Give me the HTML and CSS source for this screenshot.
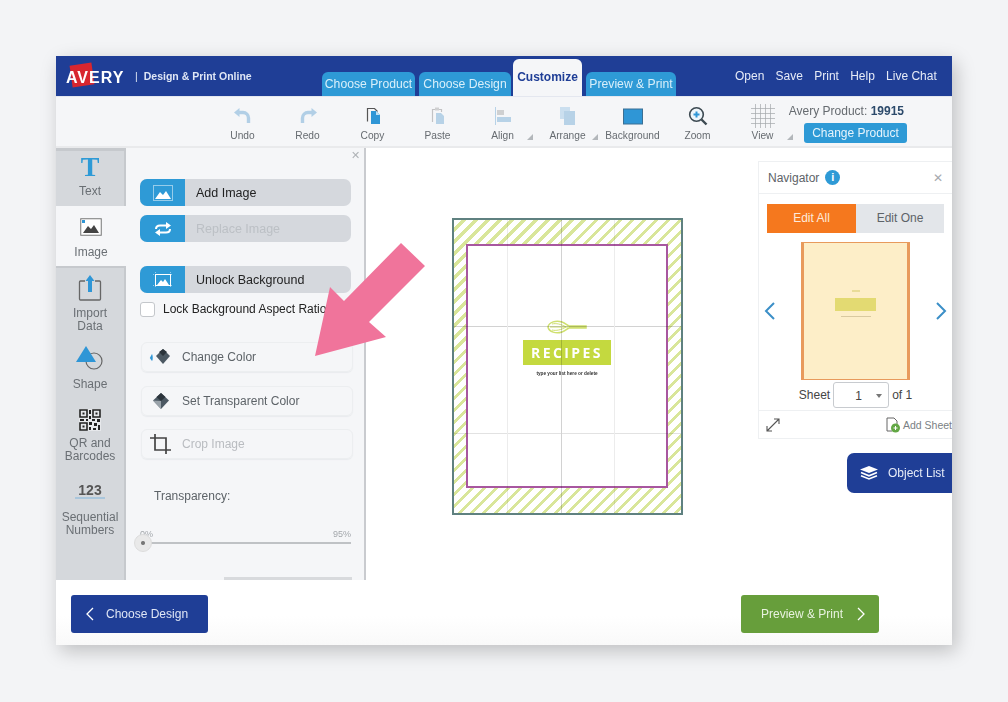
FILE: index.html
```html
<!DOCTYPE html>
<html>
<head>
    <title>Avery Design &amp; Print Online</title>
    <link rel="stylesheet" href="styles.css">
</head>
<body>
    <div class="app">
        <header class="topbar">
            <div class="brand">
                <span class="logo"><span class="logo-red"></span><span class="logo-text">AVERY</span></span>
                <span class="brand-sep">|</span>
                <span class="brand-name">Design &amp; Print Online</span>
            </div>
            <nav class="steps">
                <a class="step">Choose Product</a>
                <a class="step">Choose Design</a>
                <a class="step step-active">Customize</a>
                <a class="step">Preview &amp; Print</a>
            </nav>
            <nav class="top-links">
                <a>Open</a><a>Save</a><a>Print</a><a>Help</a><a>Live Chat</a>
            </nav>
        </header>

        <div class="toolbar">
            <div class="tool faded">
                <svg width="22" height="20" viewBox="0 0 22 20"><path d="M6 6.500h5a5.500 5.500 0 0 1 5.500 5.500v5" fill="none" stroke="#4f97cc" stroke-width="3.400"/><path d="M2 6.500 7.500 2v9z" fill="#4f97cc"/></svg>
                <span>Undo</span>
            </div>
            <div class="tool faded">
                <svg width="22" height="20" viewBox="0 0 22 20"><path d="M16 6.500h-5A5.500 5.500 0 0 0 5.500 12v5" fill="none" stroke="#4f97cc" stroke-width="3.400"/><path d="M20 6.500 14.500 2v9z" fill="#4f97cc"/></svg>
                <span>Redo</span>
            </div>
            <div class="tool">
                <svg width="22" height="20" viewBox="0 0 22 20"><path d="M5.500 15.500V2.500h7l3 3" fill="none" stroke="#555" stroke-width="1.200"/><path d="M9 5h5l4 4v9H9z" fill="#2f96d6"/><path d="M14 5v4h4z" fill="#bfe0f4"/></svg>
                <span>Copy</span>
            </div>
            <div class="tool faded">
                <svg width="22" height="20" viewBox="0 0 22 20"><path d="M5.500 16V3.500h9V6" fill="none" stroke="#777" stroke-width="1.200"/><rect x="8" y="1.500" width="4" height="3" fill="#999"/><path d="M9 7h5l3 3v8H9z" fill="#5b9fd0"/></svg>
                <span>Paste</span>
            </div>
            <div class="tool faded corner">
                <svg width="22" height="20" viewBox="0 0 22 20"><path d="M3.500 1v18" stroke="#5b9fd0" fill="none"/><rect x="5" y="4" width="7" height="5" fill="#999"/><rect x="5" y="11" width="14" height="5" fill="#5b9fd0"/></svg>
                <span>Align</span>
            </div>
            <div class="tool faded corner">
                <svg width="22" height="20" viewBox="0 0 22 20"><rect x="3" y="1" width="10" height="12" fill="#8dbfe2"/><rect x="7" y="5" width="11" height="14" fill="#5b9fd0"/></svg>
                <span>Arrange</span>
            </div>
            <div class="tool">
                <svg width="22" height="20" viewBox="0 0 22 20"><rect x="1.500" y="3" width="19" height="15" fill="#2f96d6" stroke="#3b6f93"/></svg>
                <span>Background</span>
            </div>
            <div class="tool">
                <svg width="22" height="20" viewBox="0 0 22 20"><circle cx="9.500" cy="8.500" r="6.800" fill="#eef5fa" stroke="#3d4a52" stroke-width="1.600"/><path d="M6.500 8.500h6M9.500 5.500v6" stroke="#2f96d6" stroke-width="2"/><path d="m14.500 13.500 5 5" stroke="#3d4a52" stroke-width="2.400"/></svg>
                <span>Zoom</span>
            </div>
            <div class="tool corner tool-view">
                <svg width="24" height="24" viewBox="0 0 24 24"><path d="M0 4.500h24M0 9.500h24M0 14.500h24M0 19.500h24M4.500 0v24M9.500 0v24M14.500 0v24M19.500 0v24" stroke="#a3a7ab" stroke-width=".7" fill="none"/></svg>
                <span>View</span>
            </div>
            <div class="product">
                <div class="product-name">Avery Product: <b>19915</b></div>
                <button class="change-btn">Change Product</button>
            </div>
        </div>

        <div class="workspace">
            <aside class="side-tabs">
                <div class="side-tab tab-text">
                    <span class="t-glyph">T</span>
                    <span>Text</span>
                </div>
                <div class="side-tab side-tab-active tab-image">
                    <svg width="22" height="18" viewBox="0 0 22 18"><rect x=".75" y=".75" width="20.500" height="16.500" fill="#fff" stroke="#777" stroke-width="1"/><path d="M3 15l5-7 3 3 3-4 5 8z" fill="#444"/><rect x="2" y="2" width="3" height="3" fill="#2f96d6"/></svg>
                    <span>Image</span>
                </div>
                <div class="side-tab tab-import">
                    <svg width="24" height="28" viewBox="0 0 24 28"><path d="M7 7H2.500a1 1 0 0 0-1 1v17a1 1 0 0 0 1 1h19a1 1 0 0 0 1-1V8a1 1 0 0 0-1-1H17" fill="none" stroke="#666" stroke-width="1.300"/><path d="M12 1 7.500 7H10v11h4V7h2.500z" fill="#2f96d6"/></svg>
                    <span>Import<br>Data</span>
                </div>
                <div class="side-tab tab-shape">
                    <svg width="28" height="26" viewBox="0 0 28 26"><circle cx="18" cy="16" r="8" fill="none" stroke="#666" stroke-width="1.200"/><path d="M10 1 20 17H0z" fill="#2f96d6"/></svg>
                    <span>Shape</span>
                </div>
                <div class="side-tab tab-qr">
                    <svg width="22" height="22" viewBox="0 0 22 22"><rect width="22" height="22" fill="#e6e8eb"/><path d="M1 1h7v7H1zM14 1h7v7h-7zM1 14h7v7H1z" fill="none" stroke="#222" stroke-width="1.600"/><path d="M3.500 3.500h2v2h-2zM16.500 3.500h2v2h-2zM3.500 16.500h2v2h-2zM10 1h2v4h-2zM10 7h2v3h-2zM1 10h4v2H1zM7 10h2v2H7zM13 10h3v2h-3zM18 10h3v3h-3zM10 13h3v3h-3zM15 14h3v3h-3zM19 16h2v5h-2zM10 18h2v3h-2zM14 19h3v2h-3z" fill="#222"/></svg>
                    <span>QR and<br>Barcodes</span>
                </div>
                <div class="side-tab tab-seq">
                    <span class="seq-glyph">123</span>
                    <span>Sequential<br>Numbers</span>
                </div>
            </aside>

            <section class="panel">
                <span class="panel-close">&#10005;</span>
                <div class="pill-btn">
                    <span class="pill-icon">
                        <svg width="20" height="16" viewBox="0 0 20 16"><rect x=".5" y=".5" width="19" height="15" fill="none" stroke="#fff" stroke-dasharray="1 1"/><path d="M2 14l5-7 3 3 3-4 5 8z" fill="#fff"/></svg>
                    </span>
                    <span class="pill-label">Add Image</span>
                </div>
                <div class="pill-btn pill-off">
                    <span class="pill-icon">
                        <svg width="20" height="14" viewBox="0 0 20 14"><path d="M3 7c0-2.500 2-3.500 4-3.500h7M3 7h0M17 7c0 2.500-2 3.500-4 3.500H6" fill="none" stroke="#fff" stroke-width="2"/><path d="M13 0l5 3.500L13 7zM7 7l-5 3.500L7 14z" fill="#fff"/></svg>
                    </span>
                    <span class="pill-label">Replace Image</span>
                </div>
                <div class="pill-btn pill-third">
                    <span class="pill-icon">
                        <svg width="20" height="16" viewBox="0 0 20 16"><rect x="2.500" y="2.500" width="15" height="11" fill="none" stroke="#fff"/><path d="M0 2.500h20M0 13.500h20M2.500 0v16M17.500 0v16" stroke="#fff" stroke-width=".5" stroke-dasharray="1 1"/><path d="M4 13l4-5 2 2 2-3 4 6z" fill="#fff"/></svg>
                    </span>
                    <span class="pill-label">Unlock Background</span>
                </div>
                <label class="lock-row"><span class="check"></span>Lock Background Aspect Ratio</label>

                <div class="tool-row">
                    <svg width="24" height="18" viewBox="0 0 24 18"><path d="M14 1l7 7-7 8-7-8z" fill="#4c5963"/><path d="M14 1l4 3-4 4-4-4z" fill="#2b343b"/><path d="M3 6 0.800 10 3 13c1-1 1-5 0-7z" fill="#2f96d6"/></svg>
                    <span>Change Color</span>
                </div>
                <div class="tool-row">
                    <svg width="24" height="18" viewBox="0 0 24 18"><path d="M12 1l8 7.500L12 17 4 8.500z" fill="#4c5963"/><path d="M12 1l4.500 4L12 9 7.500 5z" fill="#2b343b"/><path d="M4 8.500 12 17V9z" fill="#9aa3aa"/></svg>
                    <span>Set Transparent Color</span>
                </div>
                <div class="tool-row tool-off">
                    <svg width="24" height="20" viewBox="0 0 24 20"><path d="M6 0v16h16M1 4h16v16" fill="none" stroke="#444" stroke-width="1.700"/></svg>
                    <span>Crop Image</span>
                </div>

                <div class="transparency">Transparency:</div>
                <div class="slider-ends"><span>0%</span><span>95%</span></div>
                <div class="slider"><span class="slider-knob"></span></div>
                <div class="panel-cut"></div>
            </section>

            <main class="canvas">
                <div class="sheet">
                    <div class="safe">
                        <svg class="whisk" width="40" height="14" viewBox="0 0 40 14"><path d="M1 7C2 2 9 0 15 2c3 1 5 3 7 4h17v2H22c-2 1-4 3-7 4-6 2-13 0-14-5z" fill="none" stroke="#cfe06f" stroke-width="1.500"/><path d="M3 7h18M5 4c4-1 9 0 14 3M5 10c4 1 9 0 14-3" stroke="#cfe06f" fill="none"/><path d="M22 6h17v2H22z" fill="#cfe06f"/></svg>
                        <div class="recipes">RECIPES</div>
                        <div class="recipes-sub">type your list here or delete</div>
                    </div>
                    <div class="guides"></div>
                </div>

                <div class="navigator">
                    <div class="nav-head">
                        <span>Navigator</span>
                        <span class="info">i</span>
                        <span class="nav-close">&#10005;</span>
                    </div>
                    <div class="edit-tabs">
                        <span class="edit-tab edit-on">Edit All</span>
                        <span class="edit-tab">Edit One</span>
                    </div>
                    <div class="thumb-row">
                        <svg width="12" height="18" viewBox="0 0 12 18"><path d="M10 1 2 9l8 8" fill="none" stroke="#3b8fc7" stroke-width="2"/></svg>
                        <div class="thumb">
                            <span class="thumb-line"></span>
                            <span class="thumb-box"></span>
                            <span class="thumb-sub"></span>
                        </div>
                        <svg width="12" height="18" viewBox="0 0 12 18"><path d="m2 1 8 8-8 8" fill="none" stroke="#3b8fc7" stroke-width="2"/></svg>
                    </div>
                    <div class="sheet-row">
                        <span>Sheet</span>
                        <span class="sheet-select">1<i class="caret"></i></span>
                        <span>of 1</span>
                    </div>
                    <div class="nav-foot">
                        <svg width="16" height="16" viewBox="0 0 16 16"><path d="M2 14 14 2M2 9v5h5M9 2h5v5" fill="none" stroke="#555" stroke-width="1.100"/></svg>
                        <span class="add-sheet">
                            <svg width="16" height="16" viewBox="0 0 16 16"><path d="M9 1H2v13h5" fill="none" stroke="#666"/><path d="M9 1l3 3v3" fill="none" stroke="#666"/><circle cx="10.500" cy="11" r="4.500" fill="#62a744"/><path d="M8.500 11h4M10.500 9v4" stroke="#fff"/></svg>
                            Add Sheet
                        </span>
                    </div>
                </div>

                <div class="object-list">
                    <svg width="18" height="14" viewBox="0 0 18 14"><path d="M9 0l9 3.500L9 7 0 3.500z" fill="#fff"/><path d="M1 6.500 9 9.800l8-3.300M1 9.700 9 13l8-3.300" fill="none" stroke="#fff" stroke-width="1.600"/></svg>
                    <span>Object List</span>
                </div>
            </main>
        </div>

        <footer class="bottombar">
            <a class="nav-btn btn-back">
                <svg width="9" height="14" viewBox="0 0 9 14"><path d="M8 1 2 7l6 6" fill="none" stroke="#fff" stroke-width="1.300"/></svg>
                Choose Design
            </a>
            <a class="nav-btn btn-next">
                Preview &amp; Print
                <svg width="9" height="14" viewBox="0 0 9 14"><path d="m1 1 6 6-6 6" fill="none" stroke="#fff" stroke-width="1.300"/></svg>
            </a>
        </footer>

        <svg class="pink-arrow" width="112" height="116" viewBox="0 0 112 116"><polygon points="1,114 16,45 30,59 87,1 111,24 55,80 72,95" fill="#f0749b"/></svg>
    </div>
</body>
</html>
```

FILE: styles.css
```css
* {
    box-sizing: border-box;
}

body {
    margin: 0;
    padding: 56px;
    background-color: #f3f4f6;
    font-family: "Liberation Sans", Arial, sans-serif;
    color: #4a4f55;
}

.app {
    position: relative;
    width: 896px;
    height: 589px;
    display: flex;
    flex-direction: column;
    background-color: #fff;
    box-shadow: 4px 6px 18px rgba(0, 0, 0, 0.22);
}

/* top blue bar */
.topbar {
    height: 40px;
    flex: none;
    display: flex;
    align-items: flex-end;
    background-color: #1f3e96;
    color: #fff;
}

.brand {
    width: 266px;
    height: 40px;
    padding-left: 10px;
    display: flex;
    align-items: center;
    font-size: 10.500px;
    font-weight: bold;
    color: #dfe6f5;
}

.logo {
    position: relative;
    width: 58px;
    height: 26px;
    margin-top: 1px;
    display: flex;
    align-items: center;
}

.logo-red {
    position: absolute;
    left: 5px;
    top: 0;
    width: 22px;
    height: 22px;
    background-color: #d8262f;
    transform: rotate(-8deg);
}

.logo-text {
    position: relative;
    top: 1px;
    font-size: 16px;
    letter-spacing: 1px;
    font-weight: bold;
    color: #fff;
}

.brand-sep {
    margin: 0 6px 0 11px;
    font-weight: normal;
}

.steps {
    height: 37px;
    display: flex;
    align-items: flex-end;
    gap: 4px;
}

.step {
    width: 93px;
    height: 24px;
    padding-top: 5px;
    text-align: center;
    font-size: 12.200px;
    color: #d9effa;
    background-color: #2e9ad6;
    border-radius: 6px 6px 0 0;
}

.step:nth-child(2) {
    width: 92px;
}

.step:nth-child(3) {
    width: 69px;
    height: 40px;
    margin: 0 0 -3px -2px;
    padding-top: 11px;
    font-size: 12px;
    font-weight: bold;
    color: #1f3e96;
    background-color: #f5f6f8;
}

.step:nth-child(4) {
    width: 90px;
}

.top-links {
    margin-left: 59px;
    height: 40px;
    display: flex;
    align-items: center;
    gap: 11.250px;
    font-size: 12px;
    color: #e6ebf7;
}

/* toolbar */
.toolbar {
    height: 52px;
    flex: none;
    padding-left: 154px;
    display: flex;
    background-color: #f5f6f8;
    border-bottom: 2px solid #e9eaec;
    border-top: 1px solid #e4e7ef;
}

.tool {
    position: relative;
    width: 65px;
    display: flex;
    flex-direction: column;
    align-items: center;
    padding-top: 9px;
    gap: 3px;
    font-size: 10.200px;
    color: #666b70;
}

.tool span {
    line-height: 13px;
}

.tool svg {
    height: 20px;
}

.tool-view svg {
    height: 24px;
    margin: -2px 0 -2px;
}

.faded svg {
    opacity: 0.4;
}

.corner::after {
    content: "";
    position: absolute;
    right: 2px;
    bottom: 6px;
    border-left: 6px solid transparent;
    border-bottom: 6px solid #b3b7bb;
}

.product {
    margin-left: -8px;
    padding-top: 7px;
    display: flex;
    flex-direction: column;
    align-items: flex-end;
    width: 120px;
    font-size: 12px;
    color: #666b70;
}

.product-name {
    white-space: nowrap;
    margin-right: 3px;
}

.product-name b {
    color: #2c4a6b;
}

.change-btn {
    width: 103px;
    height: 20px;
    margin-top: 5px;
    padding: 0;
    border: none;
    border-radius: 3px;
    font-family: inherit;
    font-size: 12px;
    color: #e6f4fc;
    background-color: #2e9ad6;
}

/* main area */
.workspace {
    flex: 1;
    display: flex;
    min-height: 0;
}

.side-tabs {
    width: 70px;
    flex: none;
    display: flex;
    flex-direction: column;
    background-color: #d5d8dc;
    border-right: 2px solid #c6c9cd;
    font-size: 12px;
    color: #6a6f74;
    text-align: center;
}

.side-tab {
    display: flex;
    flex-direction: column;
    align-items: center;
    line-height: 13px;
}

.tab-text {
    height: 58px;
    gap: 2px;
    border-top: 3px solid #c6c9cd;
}

.t-glyph {
    height: 32px;
    font-family: "Liberation Serif", serif;
    font-weight: bold;
    font-size: 28px;
    line-height: 32px;
    color: #2e9ad6;
}

.tab-image {
    height: 60px;
    padding-top: 12px;
    gap: 10px;
    margin-right: -2px;
    background-color: #f5f6f8;
}

.tab-import {
    height: 79px;
    padding-top: 6px;
    gap: 5px;
    border-top: 2px solid #c6c9cd;
}

.tab-shape {
    height: 61px;
    gap: 7px;
}

.tab-qr {
    height: 78px;
    padding-top: 3px;
    gap: 6px;
}

.tab-seq {
    gap: 12px;
}

.seq-glyph {
    width: 30px;
    height: 15px;
    font-size: 14px;
    font-weight: bold;
    border-bottom: 2px solid #a9c6dc;
    color: #555;
}

.panel {
    position: relative;
    width: 240px;
    flex: none;
    padding: 31px 14px 0;
    overflow: hidden;
    background-color: #f5f6f8;
    border-right: 2px solid #c9cbcf;
}

.panel-close {
    position: absolute;
    right: 4px;
    top: 1px;
    font-size: 11px;
    color: #aeb2b6;
}

.pill-btn {
    width: 211px;
    height: 27px;
    margin-bottom: 9px;
    display: flex;
    align-items: center;
    background-color: #d5d8dd;
    border-radius: 7px;
    font-size: 12.500px;
    color: #222;
    overflow: hidden;
}

.pill-icon {
    width: 45px;
    height: 27px;
    display: flex;
    align-items: center;
    justify-content: center;
    background-color: #2e9ad6;
}

.pill-label {
    margin-left: 11px;
}

.pill-off .pill-label {
    color: #bcc0c5;
}

.pill-third {
    margin: 24px 0 8px;
}

.lock-row {
    display: flex;
    align-items: center;
    gap: 8px;
    height: 16px;
    font-size: 12px;
    color: #222;
    white-space: nowrap;
}

.check {
    width: 15px;
    height: 15px;
    flex: none;
    background-color: #fff;
    border: 1px solid #c4c7cb;
    border-radius: 3px;
}

.tool-row {
    width: 212px;
    height: 30px;
    margin: 0 0 13.500px 1px;
    padding-left: 7px;
    display: flex;
    align-items: center;
    gap: 9px;
    font-size: 12px;
    color: #5d6368;
    border: 1px solid #eceef0;
    border-radius: 6px;
    box-shadow: 0 1px 1px #e9ebee;
}

.lock-row + .tool-row {
    margin-top: 25px;
}

.tool-off span {
    color: #b9bcc0;
}

.transparency {
    margin: 30px 0 0 14px;
    font-size: 12px;
    color: #5d6368;
}

.slider-ends {
    width: 211px;
    margin-top: 26px;
    display: flex;
    justify-content: space-between;
    font-size: 9px;
    color: #a3a7ab;
}

.slider {
    position: relative;
    width: 211px;
    height: 2px;
    margin-top: 3px;
    background-color: #bfc2c5;
}

.slider-knob {
    position: absolute;
    left: -6px;
    top: -8px;
    width: 18px;
    height: 18px;
    border-radius: 50%;
    background: radial-gradient(circle, #777 0, #777 1.500px, #e9e9e9 2.500px);
    border: 1px solid #dcdcdc;
}

.panel-cut {
    position: absolute;
    left: 98px;
    bottom: 0;
    width: 128px;
    height: 3px;
    background-color: #d8dadd;
}

/* design area */
.canvas {
    position: relative;
    flex: 1;
    padding: 70px 0 0 86px;
    overflow: hidden;
    background-color: #fff;
}

.sheet {
    position: relative;
    width: 231px;
    height: 297px;
    padding: 24px 0 0 12px;
    border: 2px solid #5f8180;
    background: repeating-linear-gradient(135deg, #fff 0, #fff 5.500px, #d9e69a 5.500px, #d9e69a 8.500px);
}

.safe {
    width: 202px;
    height: 244px;
    padding-top: 74px;
    display: flex;
    flex-direction: column;
    align-items: center;
    background-color: #fff;
    border: 2px solid #a8579f;
}

.whisk {
    display: block;
}

.recipes {
    width: 88px;
    height: 25px;
    margin-top: 6px;
    text-align: center;
    font-family: "Open Sans", sans-serif;
    font-size: 14px;
    font-weight: bold;
    line-height: 25px;
    letter-spacing: 2.400px;
    color: #fff;
    background-color: #c4d93f;
}

.recipes-sub {
    margin-top: 6px;
    font-size: 4.700px;
    font-weight: bold;
    color: #333;
}

.guides {
    position: absolute;
    inset: 0;
    background-image:
        linear-gradient(to right, #ececec, #ececec),
        linear-gradient(to right, #d2d2d2, #d2d2d2),
        linear-gradient(to right, #ececec, #ececec),
        linear-gradient(to right, #d2d2d2, #d2d2d2),
        linear-gradient(to right, #e2e2e2, #e2e2e2);
    background-size: 1px 100%, 1px 100%, 1px 100%, 100% 1px, 100% 1px;
    background-position: 53px 0, 107px 0, 160px 0, 0 106px, 0 213px;
    background-repeat: no-repeat;
    mix-blend-mode: multiply;
}

/* floating navigator */
.navigator {
    position: absolute;
    left: 392px;
    top: 13px;
    width: 194px;
    height: 278px;
    font-size: 12px;
    color: #5d6368;
    background-color: #fff;
    border: 1px solid #eef0f2;
    border-right: none;
}

.nav-head {
    height: 32px;
    padding-left: 9px;
    display: flex;
    align-items: center;
    gap: 6px;
    border-bottom: 1px solid #eef0f2;
}

.info {
    width: 15px;
    height: 15px;
    border-radius: 50%;
    text-align: center;
    font-size: 11px;
    font-weight: bold;
    line-height: 15px;
    color: #fff;
    background-color: #2e9ad6;
}

.nav-close {
    margin-left: auto;
    margin-right: 9px;
    color: #a6aaae;
    font-size: 12px;
}

.edit-tabs {
    margin: 10px 8px 0;
    display: flex;
}

.edit-tab {
    width: 88px;
    height: 29px;
    text-align: center;
    line-height: 29px;
    background-color: #e3e6ea;
}

.edit-on {
    width: 89px;
    color: #fdeadb;
    background-color: #f5781e;
}

.thumb-row {
    margin-top: 9px;
    padding: 0 5px;
    display: flex;
    align-items: center;
    justify-content: space-between;
}

.thumb {
    width: 109px;
    height: 138px;
    padding-top: 47px;
    display: flex;
    flex-direction: column;
    align-items: center;
    background-color: #fdeec8;
    border: 1px solid #e89a5c;
    border-width: 1px 3px;
}

.thumb-line {
    width: 8px;
    height: 2px;
    background-color: #e9dc98;
}

.thumb-box {
    width: 41px;
    height: 13px;
    margin-top: 6px;
    background-color: #e3da72;
}

.thumb-sub {
    width: 30px;
    height: 1px;
    margin-top: 5px;
    background-color: #d9c9a0;
}

.sheet-row {
    height: 28px;
    margin-top: 1px;
    display: flex;
    align-items: center;
    justify-content: center;
    gap: 3px;
    color: #444;
}

.sheet-select {
    position: relative;
    width: 56px;
    height: 26px;
    padding: 6px 0 0 21px;
    background-color: #fff;
    border: 1px solid #c8cbcf;
    border-radius: 3px;
}

.caret {
    position: absolute;
    right: 6px;
    top: 11px;
    border: 3.500px solid transparent;
    border-top: 4px solid #777;
}

.nav-foot {
    height: 28px;
    margin-top: 1px;
    padding: 0 0 0 6px;
    display: flex;
    align-items: center;
    justify-content: space-between;
    border-top: 1px solid #eef0f2;
    white-space: nowrap;
}

.add-sheet {
    display: flex;
    align-items: center;
    gap: 2px;
    font-size: 10.500px;
    color: #7a7f84;
}

.object-list {
    position: absolute;
    right: 0;
    top: 305px;
    width: 105px;
    height: 40px;
    padding-left: 13px;
    display: flex;
    align-items: center;
    gap: 10px;
    font-size: 12px;
    color: #e6ebf7;
    background-color: #1f3e96;
    border-radius: 7px 0 0 7px;
}

/* footer */
.bottombar {
    height: 65px;
    flex: none;
    padding: 15px 73px 12px 15px;
    display: flex;
    justify-content: space-between;
    background: linear-gradient(#fff 55%, #f9f9f9);
}

.nav-btn {
    height: 38px;
    display: flex;
    align-items: center;
    gap: 12px;
    font-size: 12px;
    border-radius: 3px;
}

.btn-back {
    width: 137px;
    padding-left: 14px;
    color: #dfe6f5;
    background-color: #1f3e96;
}

.btn-next {
    width: 138px;
    padding-left: 20px;
    gap: 14px;
    color: #e8f2df;
    background-color: #679e3b;
}

.pink-arrow {
    position: absolute;
    left: 258px;
    top: 186px;
}
```
